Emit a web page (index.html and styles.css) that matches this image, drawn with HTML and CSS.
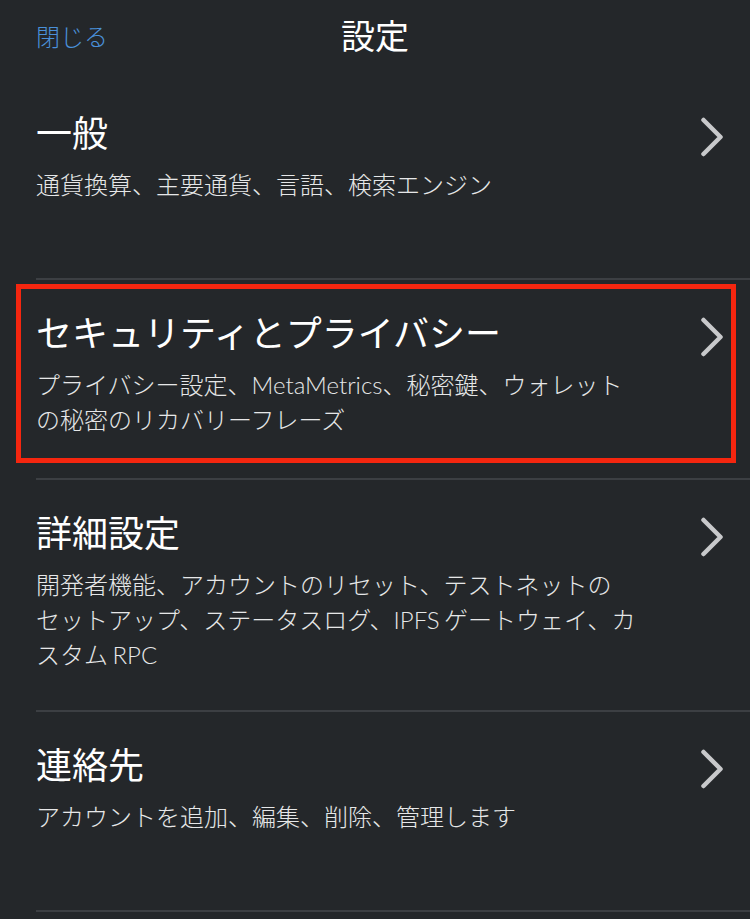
FILE: index.html
```html
<!DOCTYPE html>
<html lang="ja">
<head>
<meta charset="utf-8">
<title>設定</title>
<link rel="stylesheet" href="styles.css">
</head>
<body>
<div class="screen">
  <header class="header">
    <span class="close">閉じる</span>
    <h1 class="title">設定</h1>
    <span class="spacer"></span>
  </header>
  <ul class="list">
    <li class="item">
      <div class="item-head">
        <span class="item-title">一般</span>
        <svg class="chev" viewBox="0 0 24 40" width="24" height="40"><path d="M3.5 3 L20.5 20 L3.5 37"/></svg>
      </div>
      <p class="item-desc">通貨換算、主要通貨、言語、検索エンジン</p>
    </li>
    <li class="item highlighted">
      <div class="item-head">
        <span class="item-title">セキュリティとプライバシー</span>
        <svg class="chev" viewBox="0 0 24 40" width="24" height="40"><path d="M3.5 3 L20.5 20 L3.5 37"/></svg>
      </div>
      <p class="item-desc">プライバシー設定、MetaMetrics、秘密鍵、ウォレットの秘密のリカバリーフレーズ</p>
    </li>
    <li class="item">
      <div class="item-head">
        <span class="item-title">詳細設定</span>
        <svg class="chev" viewBox="0 0 24 40" width="24" height="40"><path d="M3.5 3 L20.5 20 L3.5 37"/></svg>
      </div>
      <p class="item-desc">開発者機能、アカウントのリセット、テストネットのセットアップ、ステータスログ、IPFS ゲートウェイ、カスタム RPC</p>
    </li>
    <li class="item">
      <div class="item-head">
        <span class="item-title">連絡先</span>
        <svg class="chev" viewBox="0 0 24 40" width="24" height="40"><path d="M3.5 3 L20.5 20 L3.5 37"/></svg>
      </div>
      <p class="item-desc">アカウントを追加、編集、削除、管理します</p>
    </li>
  </ul>
</div>
</body>
</html>
```

FILE: styles.css
```css
html, body {
  margin: 0;
  padding: 0;
  background: #24272a;
}

body {
  font-family: "Lato", "Noto Sans CJK JP", sans-serif;
  color: #ffffff;
  width: 750px;
  height: 919px;
  overflow: hidden;
}

.screen {
  display: flex;
  flex-direction: column;
}

.header {
  display: grid;
  grid-template-columns: 1fr auto 1fr;
  align-items: center;
  height: 80px;
  padding: 0 36px;
  box-sizing: border-box;
}

.close {
  color: #4a90d9;
  font-size: 24px;
  font-weight: 300;
  line-height: 34px;
  margin-top: -6px;
}

.title {
  margin: -8px 0 0;
  font-size: 34px;
  font-weight: 400;
  line-height: 44px;
  color: #ffffff;
}

.list {
  list-style: none;
  margin: 0;
  padding: 0;
}

.item {
  position: relative;
  margin-left: 36px;
  padding: 31px 26px 38px 0;
  min-height: 129px;
  border-bottom: 2px solid #3c3f43;
}

.item.highlighted::before {
  content: "";
  position: absolute;
  left: -20px;
  right: 14px;
  top: 4px;
  bottom: 15px;
  border: 5px solid #f5260f;
  pointer-events: none;
}

.item-head {
  display: flex;
  justify-content: space-between;
  align-items: center;
  height: 44px;
}

.item-title {
  font-size: 36px;
  font-weight: 400;
  line-height: 44px;
  color: #ffffff;
}

.chev {
  margin: 4px 0 -4px;
  flex: none;
}

.chev path {
  fill: none;
  stroke: #c8c9cb;
  stroke-width: 4.5;
  stroke-linecap: round;
  stroke-linejoin: round;
}

.item-desc {
  margin: 12px 0 0;
  max-width: 599.5px;
  font-size: 24px;
  font-weight: 300;
  line-height: 35px;
  word-spacing: -2px;
  color: #e6e7e8;
}
```
